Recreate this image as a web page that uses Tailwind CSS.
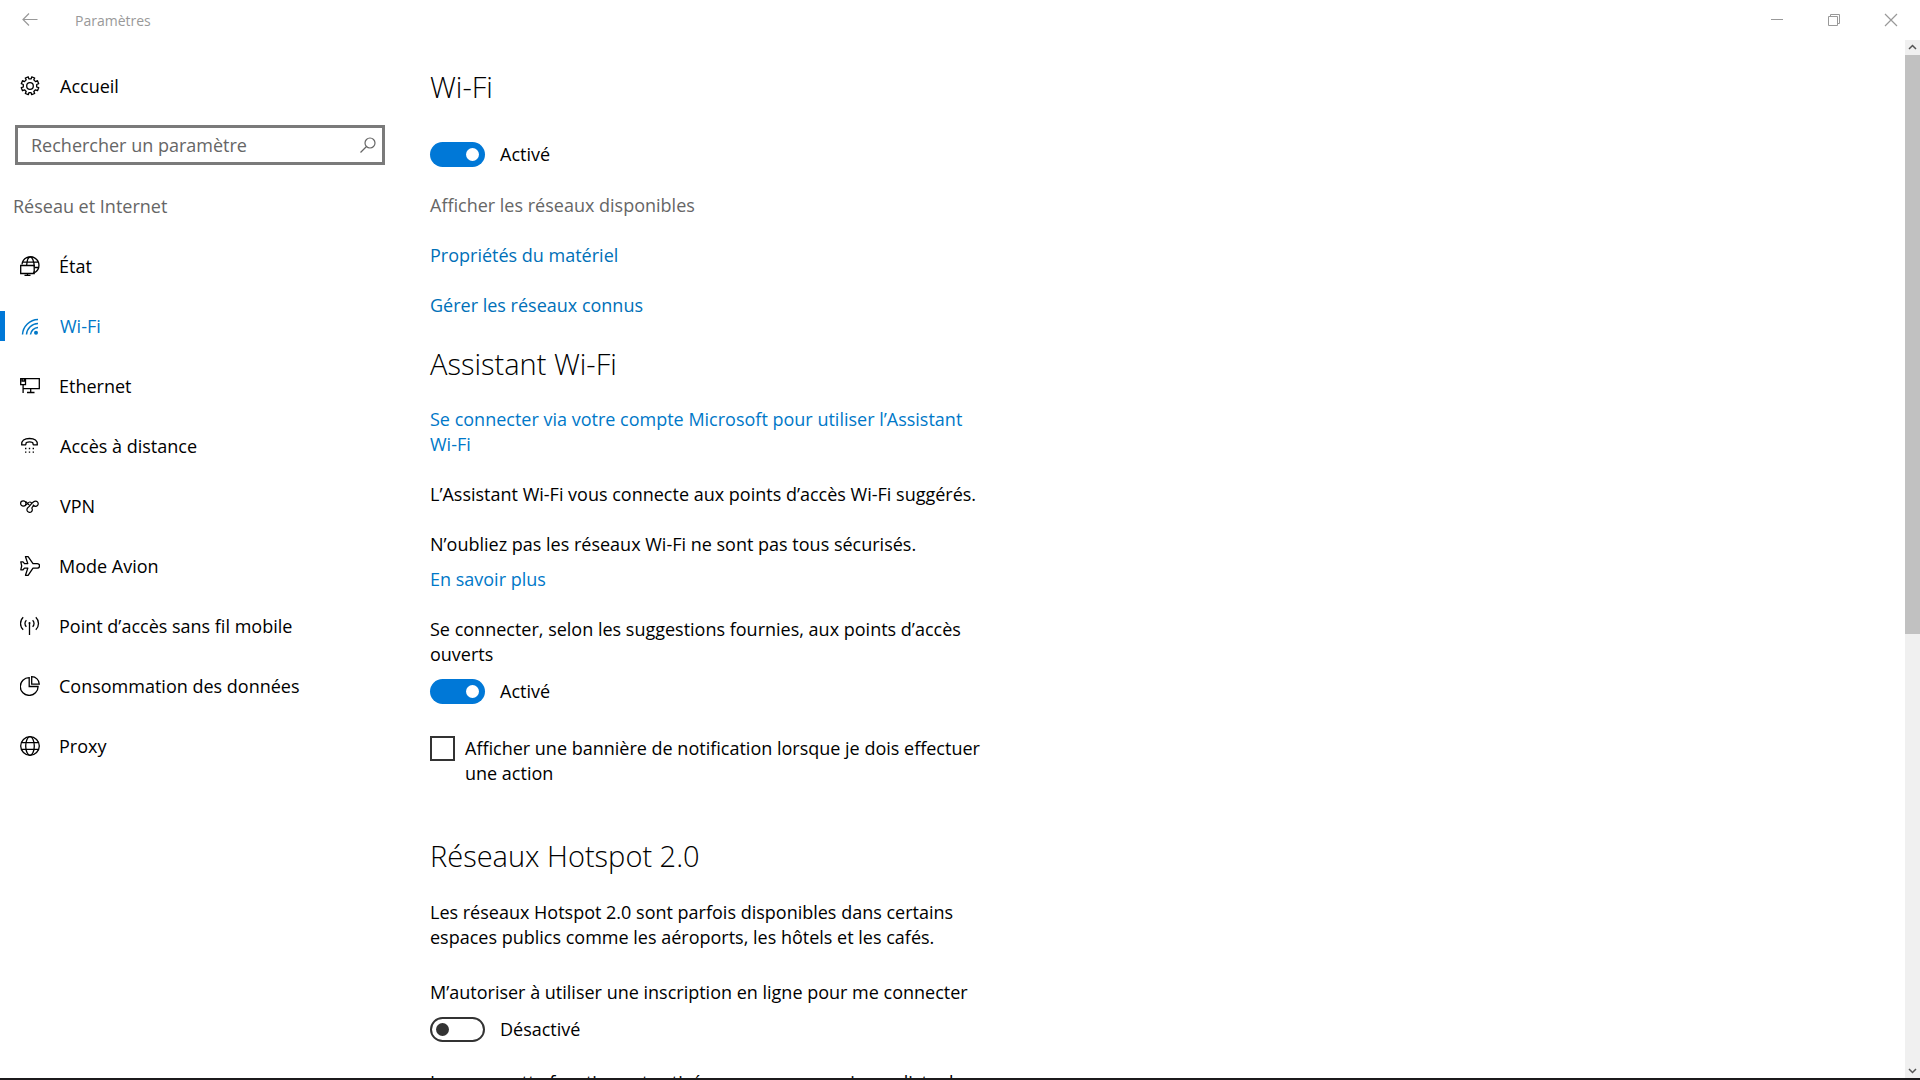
<!DOCTYPE html>
<html lang="fr">
<head>
    <meta charset="UTF-8">
    <meta name="viewport" content="width=device-width, initial-scale=1.0">
    <title>Paramètres</title>
    <script src="https://cdn.jsdelivr.net/npm/@tailwindcss/browser@4"></script>
</head>
<body class="h-screen overflow-hidden flex flex-col bg-white text-black text-[18px] leading-[25px] font-['Open_Sans','Noto_Sans',sans-serif]">

    <!-- Barre de titre -->
    <header class="h-10 shrink-0 flex items-center text-[#999]">
        <button type="button" aria-label="Retour" class="w-[60px] h-full flex items-center justify-center">
            <svg class="size-5" viewBox="0 0 20 20" fill="none" stroke="currentColor" stroke-width="1.2"><path d="M17.5 9.5H2.8M9 3.5l-6 6 6 6"/></svg>
        </button>
        <span class="ml-[15px] text-[14px]">Paramètres</span>
        <div class="ml-auto mr-px h-full flex">
            <button type="button" aria-label="Réduire" class="w-[57px] flex items-center justify-center">
                <svg class="size-5" viewBox="0 0 20 20" fill="none" stroke="currentColor"><path d="M4 9.5h12"/></svg>
            </button>
            <button type="button" aria-label="Restaurer" class="w-[57px] flex items-center justify-center">
                <svg class="size-5" viewBox="0 0 20 20" fill="none" stroke="currentColor"><path d="M4.500 6.500h9v9h-9zM6.500 6.500v-2h9v9h-2"/></svg>
            </button>
            <button type="button" aria-label="Fermer" class="w-[57px] flex items-center justify-center">
                <svg class="size-5" viewBox="0 0 20 20" fill="none" stroke="currentColor" stroke-width="1.2"><path d="M4 4l12 12M16 4L4 16"/></svg>
            </button>
        </div>
    </header>

    <div class="flex-1 min-h-0 flex">

        <!-- Menu latéral -->
        <nav class="w-[400px] shrink-0 pt-4">
            <a href="#" class="h-[60px] flex items-center gap-5 pl-5">
                <svg class="size-5" viewBox="0 0 20 20" fill="none" stroke="currentColor" stroke-width="1.300" stroke-linejoin="round"><circle cx="10" cy="10" r="3.300"/><path d="M8.300.8l.5 2 2.400 0 .5-2 3 1.200-.9 1.900 1.700 1.700 2-.9 1.200 3-2 .8v2.500l2 .7-1.200 3-2-.9-1.700 1.700.9 2-3 1.200-.6-2H8.900l-.6 2-3-1.200.9-2-1.700-1.700-2 .9-1.200-3 2-.7V8.500l-2-.8 1.200-3 2 .9 1.700-1.700-.9-1.900z"/></svg>
                Accueil
            </a>
            <div class="mt-[9px] ml-[15px] w-[370px] h-10 border-3 border-[#7a7a7a] flex items-center">
                <input type="search" aria-label="Rechercher un paramètre" placeholder="Rechercher un paramètre" class="flex-1 min-w-0 h-full pl-[13px] outline-none placeholder:text-[#666]">
                <button type="button" aria-label="Rechercher" class="w-7 h-full flex items-center justify-center text-[#666]">
                    <svg class="size-5" viewBox="0 0 20 20" fill="none" stroke="currentColor" stroke-width="1.200"><circle cx="12" cy="8" r="5"/><path d="M8.500 11.500L2.500 17.500"/></svg>
                </button>
            </div>
            <h2 class="h-[82px] flex items-center pl-[13px] text-[#666]">Réseau et Internet</h2>
            <ul class="-mt-[11px]">
                <li><a href="#" class="h-[60px] flex items-center gap-[19px] pl-5">
                    <svg class="size-5" viewBox="0 0 20 20" fill="none" stroke="currentColor" stroke-width="1.300"><path d="M2 8.500a8.500 8.500 0 1 1 13 8M3 6.200h15M14.500 11.500h4M6.700 9C7 4.500 8.500 1 10.300 1s3.900 4 3.900 9.500M14.200 15.500c-.2.900-.5 1.500-.8 2"/><path d="M.7 9.500h13.500v8H.7zM7.500 17.500v2M4.500 19.300h6"/></svg>
                    État
                </a></li>
                <li><a href="#" aria-current="page" class="h-[60px] flex items-center text-[#0078c8]">
                    <span class="w-[5px] h-[30px] mr-[15px] bg-[#0078d7]"></span>
                    <svg class="size-5 mr-5" viewBox="0 0 20 20" fill="none" stroke="currentColor" stroke-width="1.500"><path d="M2.500 18.500A16 16 0 0 1 18 3.500M6.500 18.500A12 12 0 0 1 18 7.500M10.500 18.500A8 8 0 0 1 18 11.500"/><circle cx="16" cy="16.700" r="2" fill="currentColor" stroke="none"/></svg>
                    Wi-Fi
                </a></li>
                <li><a href="#" class="h-[60px] flex items-center gap-[19px] pl-5">
                    <svg class="size-5" viewBox="0 0 20 20" fill="none" stroke="currentColor" stroke-width="1.300"><path d="M.7 2.700h4.800v6H.7zM2.200 2.700v2.500h2V2.700M3.100 8.700v8.300M5.500 2.700h13.800v10H3.100M10.700 12.700v3.600M7 16.500h7.500"/></svg>
                    Ethernet
                </a></li>
                <li><a href="#" class="h-[60px] flex items-center gap-5 pl-5">
                    <svg class="size-5" viewBox="0 0 20 20" fill="none" stroke="currentColor" stroke-width="1.300"><path d="M1.700 8.800C1.200 4.500 4.500 2.500 9.500 2.500s8.300 2 7.800 6.300h-4L12.700 6.500c-2-.7-4.300-.7-6.400 0l-.6 2.300z" stroke-linejoin="round"/><path d="M5 12.500h1.400M8.800 12.500h1.400M12.600 12.500H14M5 16.200h1.400M8.800 16.200h1.400M12.600 16.200H14"/></svg>
                    Accès à distance
                </a></li>
                <li><a href="#" class="h-[60px] flex items-center gap-5 pl-5">
                    <svg class="size-5" viewBox="0 0 20 20" fill="none" stroke="currentColor" stroke-width="1.200"><circle cx="3.300" cy="7.500" r="2.700"/><path d="M5.400 5.700c1.600.2 2.500 2.700 4 3.300M5.600 9c1.600-.4 2.400-3 4.200-3 .9 0 1.300.4 1.800.9M11.800 12c1.200-2.600 2.400-1.400 1.200-3.400M13 9c.8.900 1.500 1.300 2.600 1.300a2.600 2.600 0 1 0 0-5.200c-3.600 0-5.200 5-7.600 6.500a2.700 2.700 0 1 0 3.600.3"/></svg>
                    VPN
                </a></li>
                <li><a href="#" class="h-[60px] flex items-center gap-[19px] pl-5">
                    <svg class="size-5" viewBox="0 0 20 20" fill="none" stroke="currentColor" stroke-width="1.300" stroke-linejoin="round"><path d="M5.500.7h2.600L13 7.600h4.300a2.200 2.200 0 0 1 0 4.500H13l-4.900 7.200H5.500l2.300-7.200H4.500L3 13.800H.8l.9-4-.9-4H3l1.500 1.800h3.300z"/></svg>
                    Mode Avion
                </a></li>
                <li><a href="#" class="h-[60px] flex items-center gap-[19px] pl-5">
                    <svg class="size-5" viewBox="0 0 20 20" fill="none" stroke="currentColor" stroke-width="1.300"><path d="M9.500 7v12M6.400 4.200a4.500 4.500 0 0 0 0 6.600M12.600 4.200a4.500 4.500 0 0 1 0 6.600M3.200 1.300a8.500 8.500 0 0 0 0 12.400M15.800 1.300a8.500 8.500 0 0 1 0 12.400"/><circle cx="9.500" cy="7" r="1" fill="currentColor" stroke="none"/></svg>
                    Point d’accès sans fil mobile
                </a></li>
                <li><a href="#" class="h-[60px] flex items-center gap-[19px] pl-5">
                    <svg class="size-5" viewBox="0 0 20 20" fill="none" stroke="currentColor" stroke-width="1.300"><path d="M9.200 1.600a8.900 8.900 0 1 0 8.900 8.900H9.200z"/><path d="M11.700.7a7.600 7.600 0 0 1 7.600 7.500h-7.600z"/></svg>
                    Consommation des données
                </a></li>
                <li><a href="#" class="h-[60px] flex items-center gap-[19px] pl-5">
                    <svg class="size-5" viewBox="0 0 20 20" fill="none" stroke="currentColor" stroke-width="1.300"><circle cx="10" cy="10" r="9.300"/><ellipse cx="10" cy="10" rx="4.300" ry="9.300"/><path d="M1.500 6.700h17M1.500 13.300h17"/></svg>
                    Proxy
                </a></li>
            </ul>
        </nav>

        <!-- Contenu -->
        <main class="flex-1 min-w-0 overflow-hidden pl-[30px]">
            <div class="max-w-[550px]">
                <section>
                    <h1 class="pt-[27px] text-[29px] leading-10 font-light">Wi-Fi</h1>
                    <label class="mt-[35px] flex items-center gap-[15px]">
                        <input type="checkbox" role="switch" checked class="appearance-none w-[55px] h-[25px] rounded-full bg-[#0078d7] flex items-center justify-end px-[6px] before:size-[13px] before:rounded-full before:bg-white">
                        Activé
                    </label>
                    <p class="mt-[26px] text-[#666]">Afficher les réseaux disponibles</p>
                    <p class="mt-[25px]"><a href="#" class="text-[#0070b8]">Propriétés du matériel</a></p>
                    <p class="mt-[25px]"><a href="#" class="text-[#0070b8]">Gérer les réseaux connus</a></p>
                </section>

                <section>
                    <h2 class="mt-[26px] text-[29px] leading-10 font-light">Assistant Wi-Fi</h2>
                    <p class="mt-[23px]"><a href="#" class="text-[#0078c8]">Se connecter via votre compte Microsoft pour utiliser l’Assistant Wi-Fi</a></p>
                    <p class="mt-[25px]">L’Assistant Wi-Fi vous connecte aux points d’accès Wi-Fi suggérés.</p>
                    <p class="mt-[25px]">N’oubliez pas les réseaux Wi-Fi ne sont pas tous sécurisés.</p>
                    <p class="mt-[10px]"><a href="#" class="text-[#0078c8]">En savoir plus</a></p>
                    <p id="ouverts" class="mt-[25px]">Se connecter, selon les suggestions fournies, aux points d’accès ouverts</p>
                    <label class="mt-3 flex items-center gap-[15px]">
                        <input type="checkbox" role="switch" checked aria-describedby="ouverts" class="appearance-none w-[55px] h-[25px] rounded-full bg-[#0078d7] flex items-center justify-end px-[6px] before:size-[13px] before:rounded-full before:bg-white">
                        Activé
                    </label>
                    <label class="mt-8 flex items-start gap-[10px]">
                        <input type="checkbox" class="appearance-none size-[25px] shrink-0 border-2 border-[#333]">
                        <span>Afficher une bannière de notification lorsque je dois effectuer une action</span>
                    </label>
                </section>

                <section>
                    <h2 class="mt-[50px] text-[29px] leading-10 font-light">Réseaux Hotspot 2.0</h2>
                    <p class="mt-6">Les réseaux Hotspot 2.0 sont parfois disponibles dans certains espaces publics comme les aéroports, les hôtels et les cafés.</p>
                    <p id="inscription" class="mt-[30px]">M’autoriser à utiliser une inscription en ligne pour me connecter</p>
                    <label class="mt-3 flex items-center gap-[15px]">
                        <input type="checkbox" role="switch" aria-describedby="inscription" class="appearance-none w-[55px] h-[25px] rounded-full border-2 border-[#333] flex items-center px-1 before:size-[13px] before:rounded-full before:bg-[#333]">
                        Désactivé
                    </label>
                    <p class="mt-7">Lorsque cette fonction est activée, vous pouvez voir une liste de</p>
                </section>
            </div>
        </main>

        <!-- Barre de défilement -->
        <div class="w-[15px] shrink-0 flex flex-col bg-[#f0f0f0] text-[#555]">
            <button type="button" aria-label="Défiler vers le haut" class="h-[15px] flex items-center justify-center">
                <svg class="w-[15px] h-[15px]" viewBox="0 0 15 15" fill="none" stroke="currentColor" stroke-width="1.500"><path d="M4 9l3.500-3.500L11 9"/></svg>
            </button>
            <div class="flex-1">
                <div class="bg-[#c1c1c1]" style="height: 57.4%"></div>
            </div>
            <button type="button" aria-label="Défiler vers le bas" class="h-[15px] flex items-center justify-center">
                <svg class="w-[15px] h-[15px]" viewBox="0 0 15 15" fill="none" stroke="currentColor" stroke-width="1.500"><path d="M4 6l3.500 3.500L11 6"/></svg>
            </button>
        </div>
    </div>

    <!-- Bord de la barre des tâches -->
    <footer class="h-0.5 shrink-0 bg-[#1c1a1c]"></footer>

</body>
</html>
